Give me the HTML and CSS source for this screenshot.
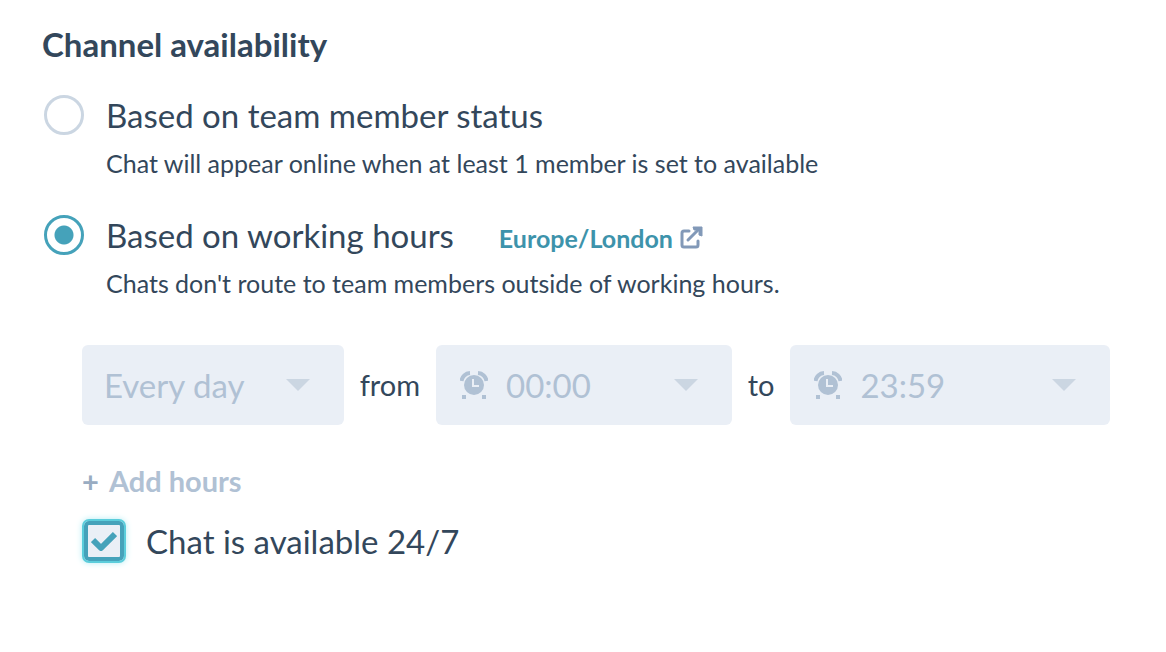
FILE: index.html
```html
<!DOCTYPE html>
<html lang="en">
<head>
    <meta charset="UTF-8">
    <title>Channel availability</title>
    <link rel="stylesheet" href="styles.css">
</head>
<body>
<form class="availability">
    <h2 class="title">Channel availability</h2>

    <div class="option">
        <input class="radio" type="radio" name="mode" id="mode-status">
        <div class="option-body">
            <label class="label" for="mode-status">Based on team member status</label>
            <p class="hint">Chat will appear online when at least 1 member is set to available</p>
        </div>
    </div>

    <div class="option">
        <input class="radio" type="radio" name="mode" id="mode-hours" checked>
        <div class="option-body">
            <div class="option-head">
                <label class="label" for="mode-hours">Based on working hours</label>
                <a class="timezone" href="#">Europe/London
                    <svg class="external" viewBox="0 0 24 24" width="24" height="24" aria-hidden="true">
                        <path d="M10 5H5Q3 5 3 7V19Q3 21 5 21H17Q19 21 19 19V15" fill="none" stroke="currentColor" stroke-width="3" stroke-linecap="round"/>
                        <path d="M9 14L19 4" fill="none" stroke="currentColor" stroke-width="3" stroke-linecap="round"/>
                        <path d="M14 1H23V10L20 9V4H15Z" fill="currentColor" stroke="currentColor" stroke-linejoin="round"/>
                    </svg>
                </a>
            </div>
            <p class="hint">Chats don't route to team members outside of working hours.</p>
        </div>
    </div>

    <div class="hours">
        <div class="range">
            <div class="field field-day">
                <select class="select" aria-label="Day" disabled>
                    <option>Every day</option>
                </select>
                <svg class="caret" viewBox="0 0 24 12" width="24" height="12" aria-hidden="true"><path d="M0 0H24L12 12Z"/></svg>
            </div>
            <span class="word">from</span>
            <div class="field field-from">
                <svg class="clock" viewBox="0 0 28 28" width="28" height="28" aria-hidden="true">
                    <circle cx="14" cy="14" r="10"/>
                    <path class="bell" d="M1.500 10A9 9 0 0 1 10 2M18 2A9 9 0 0 1 26.500 10"/>
                    <path d="M2 24H6V28H2ZM22 24H26V28H22Z"/>
                    <path class="hands" d="M13 8V15H19"/>
                </svg>
                <select class="select" aria-label="From" disabled>
                    <option>00:00</option>
                </select>
                <svg class="caret" viewBox="0 0 24 12" width="24" height="12" aria-hidden="true"><path d="M0 0H24L12 12Z"/></svg>
            </div>
            <span class="word">to</span>
            <div class="field field-to">
                <svg class="clock" viewBox="0 0 28 28" width="28" height="28" aria-hidden="true">
                    <circle cx="14" cy="14" r="10"/>
                    <path class="bell" d="M1.500 10A9 9 0 0 1 10 2M18 2A9 9 0 0 1 26.500 10"/>
                    <path d="M2 24H6V28H2ZM22 24H26V28H22Z"/>
                    <path class="hands" d="M13 8V15H19"/>
                </svg>
                <select class="select" aria-label="To" disabled>
                    <option>23:59</option>
                </select>
                <svg class="caret" viewBox="0 0 24 12" width="24" height="12" aria-hidden="true"><path d="M0 0H24L12 12Z"/></svg>
            </div>
        </div>

        <button class="add" type="button" disabled><span class="plus">+</span> Add hours</button>

        <div class="always">
            <span class="check">
                <input class="checkbox" type="checkbox" id="always" checked>
                <svg class="tick" viewBox="0 0 26 20" width="26" height="20" aria-hidden="true"><path d="M2 9L10 17L24 3"/></svg>
            </span>
            <label class="label" for="always">Chat is available 24/7</label>
        </div>
    </div>
</form>
</body>
</html>
```
FILE: styles.css
```css
*{
    box-sizing: border-box;
    margin: 0;
    padding: 0;
}
body{
    background: #fff;
    color: #33475b;
    font-family: Lato, "Liberation Sans", sans-serif;
}
.availability{
    padding: 24px 56px 24px 42px;
}
.title{
    margin-bottom: 31px;
    font-size: 33px;
    line-height: 40px;
    font-weight: 700;
}
.option{
    display: flex;
    gap: 22px;
    margin-bottom: 36px;
    padding-left: 2px;
}
.radio{
    flex: none;
    width: 40px;
    height: 40px;
    border: 3px solid #cbd6e2;
    border-radius: 50%;
    appearance: none;
}
.radio:checked{
    border-color: #45a2ba;
    background: radial-gradient(circle, #45a2ba 9px, #fff 10px);
}
.label{
    font-size: 33px;
    line-height: 40px;
}
.option-head{
    display: flex;
    align-items: baseline;
    gap: 45px;
}
.hint{
    margin-top: 12px;
    font-size: 25px;
    line-height: 32px;
}
.timezone{
    display: flex;
    align-items: center;
    gap: 6px;
    color: #3d93ab;
    font-size: 25px;
    line-height: 32px;
    font-weight: 700;
    text-decoration: none;
}
.external{
    color: #8299b8;
}

/* working hours */
.hours{
    padding: 10px 0 0 40px;
}
.range{
    display: flex;
    align-items: center;
    gap: 16px;
}
.field{
    display: flex;
    align-items: center;
    height: 80px;
    padding: 0 34px 0 24px;
    border-radius: 6px;
    background: #eaeff6;
    color: #b0c1d4;
}
.field-day{
    flex: 1 1 262px;
    padding-left: 22px;
}
.field-from{
    flex: 1 1 296px;
}
.field-to{
    flex: 1 1 320px;
}
.select{
    flex: 1;
    min-width: 0;
    border: none;
    background: none;
    color: inherit;
    font: 33px/40px Lato, "Liberation Sans", sans-serif;
    opacity: 1;
    appearance: none;
}
.caret{
    flex: none;
    fill: #cbd6e2;
}
.clock{
    flex: none;
    margin-right: 18px;
    fill: #b0c1d4;
}
.clock .bell{
    fill: none;
    stroke: #b0c1d4;
    stroke-width: 4;
}
.clock .hands{
    fill: none;
    stroke: #eaeff6;
    stroke-width: 2;
}
.word{
    font-size: 29px;
    line-height: 40px;
}
.add{
    display: block;
    margin: 36px 0 18px;
    border: none;
    background: none;
    color: #b0c1d4;
    font: 700 29px/40px Lato, "Liberation Sans", sans-serif;
}
.plus{
    margin-right: 4px;
    color: #99acc2;
}
.always{
    display: flex;
    align-items: center;
    gap: 20px;
}
.check{
    display: grid;
    place-items: center;
}
.checkbox,
.tick{
    grid-area: 1 / 1;
}
.checkbox{
    width: 44px;
    height: 44px;
    border: 2px solid #5bcddb;
    border-radius: 7px;
    background: #eaeff6;
    box-shadow: inset 0 0 0 4px #45a2ba, 0 0 6px #b5edf3;
    appearance: none;
}
.tick{
    fill: none;
    stroke: #45a2ba;
    stroke-width: 6;
    stroke-linejoin: round;
    pointer-events: none;
}
```
